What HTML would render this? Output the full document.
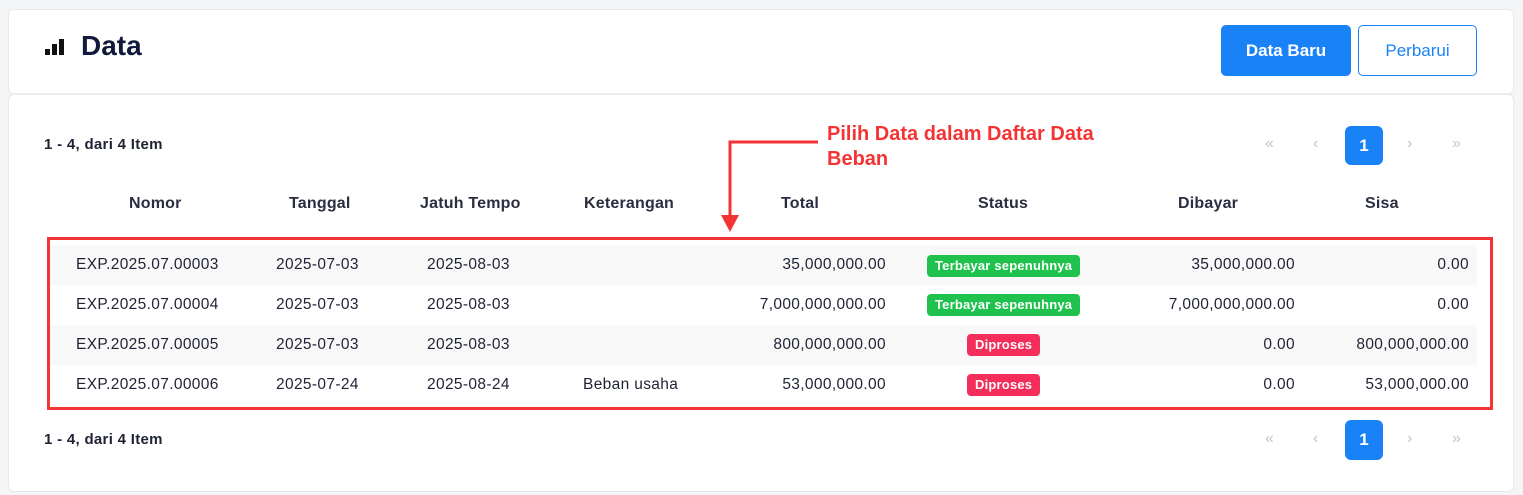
<!DOCTYPE html>
<html><head><style>
body{margin:0;width:1523px;height:495px;background:#f4f5f7;font-family:"Liberation Sans",sans-serif;color:#1e2235;position:relative;overflow:hidden}
.card{position:absolute;left:8px;width:1504px;background:#fff;border:1px solid #e8e9ec;border-radius:6px}
.abs{position:absolute;white-space:nowrap}
.h{font-weight:bold;font-size:16px;color:#2a2e40;letter-spacing:0.2px}
.c{font-size:15.5px;color:#1e2235;letter-spacing:0.35px}
.badge{position:absolute;height:22px;line-height:22px;border-radius:4px;color:#fff;font-weight:bold;font-size:13px;padding:0 8px;letter-spacing:0.2px}
.pg{position:absolute;color:#c2c6d0;font-size:16px}
</style></head><body>
<div class="card" style="top:9px;height:83px;border-bottom:2px solid #eee"></div>
<div class="card" style="top:94px;height:396px"></div>
<svg class="abs" style="left:45px;top:38px" width="20" height="20"><rect x="0" y="11" width="5" height="6" fill="#111"/><rect x="7" y="6" width="5" height="11" fill="#111"/><rect x="14" y="1" width="5" height="16" fill="#111"/></svg>
<div class="abs" style="left:81px;top:30px;font-size:28px;font-weight:bold;color:#111a3a">Data</div>
<div class="abs" style="left:1221px;top:25px;width:130px;height:51px;background:#1a82f7;border-radius:5px;color:#fff;font-size:17px;font-weight:bold;text-align:center;line-height:51px">Data Baru</div>
<div class="abs" style="left:1358px;top:25px;width:117px;height:49px;border:1px solid #1a82f7;border-radius:5px;color:#1a82f7;font-size:17px;text-align:center;line-height:49px">Perbarui</div>

<div class="abs" style="left:44px;top:136px;font-size:15px;font-weight:bold;letter-spacing:0.3px">1 - 4, dari 4 Item</div>
<div class="abs" style="left:44px;top:431px;font-size:15px;font-weight:bold;letter-spacing:0.3px">1 - 4, dari 4 Item</div>
<div class="pg" style="left:1265px;top:135px">«</div><div class="pg" style="left:1313px;top:135px">‹</div>
<div class="abs" style="left:1345px;top:126px;width:38px;height:39px;background:#1a82f7;border-radius:6px;color:#fff;font-weight:bold;font-size:17px;text-align:center;line-height:39px">1</div>
<div class="pg" style="left:1407px;top:135px">›</div><div class="pg" style="left:1452px;top:135px">»</div>
<div class="pg" style="left:1265px;top:430px">«</div><div class="pg" style="left:1313px;top:430px">‹</div>
<div class="abs" style="left:1345px;top:420px;width:38px;height:40px;background:#1a82f7;border-radius:6px;color:#fff;font-weight:bold;font-size:17px;text-align:center;line-height:40px">1</div>
<div class="pg" style="left:1407px;top:430px">›</div><div class="pg" style="left:1452px;top:430px">»</div>

<div class="abs" style="left:827px;top:122px;color:#f43434;font-weight:bold;font-size:20px;line-height:25px">Pilih Data dalam Daftar Data<br>Beban</div>
<svg class="abs" style="left:715px;top:135px" width="110" height="100"><path d="M103 7H15V82" stroke="#f43434" stroke-width="3" fill="none"/><path d="M6 80H24L15 97Z" fill="#f43434"/></svg>

<div class="abs h" style="left:129px;top:195px">Nomor</div>
<div class="abs h" style="left:289px;top:195px">Tanggal</div>
<div class="abs h" style="left:420px;top:195px">Jatuh Tempo</div>
<div class="abs h" style="left:584px;top:195px">Keterangan</div>
<div class="abs h" style="left:781px;top:195px">Total</div>
<div class="abs h" style="left:978px;top:195px">Status</div>
<div class="abs h" style="left:1178px;top:195px">Dibayar</div>
<div class="abs h" style="left:1365px;top:195px">Sisa</div>

<div class="abs" style="left:50px;top:245px;width:1427px;height:40px;background:#f8f8f9"></div>
<div class="abs" style="left:50px;top:325px;width:1427px;height:40px;background:#f8f8f9"></div>

<div class="abs c" style="left:76px;top:256px">EXP.2025.07.00003</div>
<div class="abs c" style="left:276px;top:256px">2025-07-03</div>
<div class="abs c" style="left:427px;top:256px">2025-08-03</div>
<div class="abs c" style="right:637px;top:256px">35,000,000.00</div>
<div class="badge" style="left:927px;top:255px;background:#1fc24d">Terbayar sepenuhnya</div>
<div class="abs c" style="right:228px;top:256px">35,000,000.00</div>
<div class="abs c" style="right:54px;top:256px">0.00</div>

<div class="abs c" style="left:76px;top:296px">EXP.2025.07.00004</div>
<div class="abs c" style="left:276px;top:296px">2025-07-03</div>
<div class="abs c" style="left:427px;top:296px">2025-08-03</div>
<div class="abs c" style="right:637px;top:296px">7,000,000,000.00</div>
<div class="badge" style="left:927px;top:294px;background:#1fc24d">Terbayar sepenuhnya</div>
<div class="abs c" style="right:228px;top:296px">7,000,000,000.00</div>
<div class="abs c" style="right:54px;top:296px">0.00</div>

<div class="abs c" style="left:76px;top:336px">EXP.2025.07.00005</div>
<div class="abs c" style="left:276px;top:336px">2025-07-03</div>
<div class="abs c" style="left:427px;top:336px">2025-08-03</div>
<div class="abs c" style="right:637px;top:336px">800,000,000.00</div>
<div class="badge" style="left:967px;top:334px;background:#f52d5a">Diproses</div>
<div class="abs c" style="right:228px;top:336px">0.00</div>
<div class="abs c" style="right:54px;top:336px">800,000,000.00</div>

<div class="abs c" style="left:76px;top:376px">EXP.2025.07.00006</div>
<div class="abs c" style="left:276px;top:376px">2025-07-24</div>
<div class="abs c" style="left:427px;top:376px">2025-08-24</div>
<div class="abs c" style="left:583px;top:376px">Beban usaha</div>
<div class="abs c" style="right:637px;top:376px">53,000,000.00</div>
<div class="badge" style="left:967px;top:374px;background:#f52d5a">Diproses</div>
<div class="abs c" style="right:228px;top:376px">0.00</div>
<div class="abs c" style="right:54px;top:376px">53,000,000.00</div>

<div class="abs" style="left:47px;top:237px;width:1440px;height:167px;border:3px solid #f43434"></div>
</body></html>
